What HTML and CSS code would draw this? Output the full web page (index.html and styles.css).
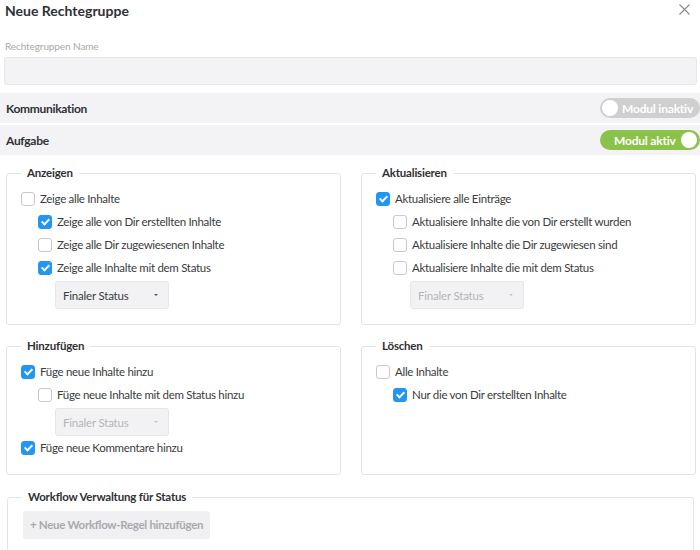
FILE: index.html
```html
<!DOCTYPE html>
<html lang="de">

<head>
    <meta charset="UTF-8">
    <meta name="viewport" content="width=device-width, initial-scale=1.0">
    <title>Neue Rechtegruppe</title>
    <link rel="stylesheet" href="styles.css">
</head>

<body>
    <div class="modal">
        <!-- Kopf -->
        <div class="modal_head">
            <h1 class="modal_title">Neue Rechtegruppe</h1>
            <span class="close_btn">
                <svg width="11" height="11" viewBox="0 0 11 11">
                    <path d="M0.5 0.5 L10.5 10.5 M10.5 0.5 L0.5 10.5" stroke="#8a8a8a" stroke-width="1.1" fill="none" />
                </svg>
            </span>
        </div>

        <div class="name_field">
            <div class="field_label">Rechtegruppen Name</div>
            <div class="text_input"></div>
        </div>

        <!-- Module -->
        <div class="module_row">
            <span class="module_name">Kommunikation</span>
            <span class="toggle toggle_off"><span class="knob"></span>Modul inaktiv</span>
        </div>
        <div class="module_row">
            <span class="module_name">Aufgabe</span>
            <span class="toggle toggle_on">Modul aktiv<span class="knob"></span></span>
        </div>

        <!-- Rechte -->
        <div class="perm_grid">
            <fieldset class="perm_box">
                <legend>Anzeigen</legend>
                <div class="check_row"><span class="check"></span>Zeige alle Inhalte</div>
                <div class="sub">
                    <div class="check_row"><span class="check checked"></span>Zeige alle von Dir erstellten Inhalte</div>
                    <div class="check_row"><span class="check"></span>Zeige alle Dir zugewiesenen Inhalte</div>
                    <div class="check_row"><span class="check checked"></span>Zeige alle Inhalte mit dem Status</div>
                    <div class="sub">
                        <div class="status_select">Finaler Status<span class="caret"></span></div>
                    </div>
                </div>
            </fieldset>

            <fieldset class="perm_box">
                <legend>Aktualisieren</legend>
                <div class="check_row"><span class="check checked"></span>Aktualisiere alle Einträge</div>
                <div class="sub">
                    <div class="check_row"><span class="check"></span>Aktualisiere Inhalte die von Dir erstellt wurden</div>
                    <div class="check_row"><span class="check"></span>Aktualisiere Inhalte die Dir zugewiesen sind</div>
                    <div class="check_row"><span class="check"></span>Aktualisiere Inhalte die mit dem Status</div>
                    <div class="sub">
                        <div class="status_select disabled">Finaler Status<span class="caret"></span></div>
                    </div>
                </div>
            </fieldset>

            <fieldset class="perm_box">
                <legend>Hinzufügen</legend>
                <div class="check_row"><span class="check checked"></span>Füge neue Inhalte hinzu</div>
                <div class="sub">
                    <div class="check_row"><span class="check"></span>Füge neue Inhalte mit dem Status hinzu</div>
                    <div class="sub">
                        <div class="status_select disabled">Finaler Status<span class="caret"></span></div>
                    </div>
                </div>
                <div class="check_row"><span class="check checked"></span>Füge neue Kommentare hinzu</div>
            </fieldset>

            <fieldset class="perm_box">
                <legend>Löschen</legend>
                <div class="check_row"><span class="check"></span>Alle Inhalte</div>
                <div class="sub">
                    <div class="check_row"><span class="check checked"></span>Nur die von Dir erstellten Inhalte</div>
                </div>
            </fieldset>
        </div>

        <fieldset class="perm_box workflow_box">
            <legend>Workflow Verwaltung für Status</legend>
            <div class="add_rule_btn">+ Neue Workflow-Regel hinzufügen</div>
        </fieldset>
    </div>
</body>

</html>
```
FILE: styles.css
```css
body {
    margin: 0;
    background-color: #fff;
    font-family: "Lato", "Liberation Sans", sans-serif;
    color: #333;
}

.modal {
    width: 700px;
}

/* Kopf */
.modal_head {
    display: flex;
    justify-content: space-between;
    align-items: center;
    height: 20px;
    padding: 0 10px 0 5px;
}

.modal_title {
    margin: 0;
    font-size: 14px;
    font-weight: bold;
    color: #2f3135;
}

.close_btn {
    display: flex;
    margin-top: -1px;
}

/* Name */
.name_field {
    padding: 20px 3px 0 4px;
    margin-bottom: 8px;
}

.field_label {
    font-size: 10px;
    color: #a9a9a9;
    padding-left: 1px;
    margin-bottom: 5px;
    letter-spacing: -0.1px;
}

.text_input {
    height: 26px;
    background-color: #f3f3f5;
    border: 1px solid #e6e6e8;
    border-radius: 3px;
}

/* Module */
.module_row {
    display: flex;
    justify-content: space-between;
    align-items: center;
    height: 30px;
    padding-left: 6px;
    background-color: #f3f3f5;
    margin-bottom: 2px;
}

.module_name {
    font-size: 12px;
    font-weight: bold;
    color: #2f3135;
    letter-spacing: -0.3px;
}

.toggle {
    display: flex;
    align-items: center;
    width: 100px;
    height: 20px;
    box-sizing: border-box;
    border-radius: 10px;
    color: #fff;
    font-size: 12px;
    font-weight: bold;
    letter-spacing: -0.2px;
}

.toggle .knob {
    width: 16px;
    height: 16px;
    border-radius: 50%;
    background-color: #fff;
}

.toggle_off {
    background-color: #cfcfcf;
    padding-left: 2px;
}

.toggle_off .knob {
    margin-right: 4px;
}

.toggle_on {
    background-color: #8bc34a;
    padding-left: 14px;
    justify-content: space-between;
    padding-right: 3px;
}

/* Rechte */
.perm_grid {
    display: grid;
    grid-template-columns: 335px 335px;
    column-gap: 20px;
    row-gap: 13px;
    padding: 8px 5px 0 6px;
}

.perm_box {
    margin: 0;
    padding: 6px 14px 15px 14px;
    border: 1px solid #e4e4e6;
    border-radius: 3px;
    min-width: 0;
}

.perm_box legend {
    padding: 0 6px;
    font-size: 11.5px;
    font-weight: bold;
    color: #2f3135;
    line-height: 16px;
    letter-spacing: -0.2px;
}

.sub {
    padding-left: 17px;
}

.check_row {
    display: flex;
    align-items: center;
    height: 23px;
    font-size: 11.5px;
    color: #3a3c40;
    letter-spacing: -0.3px;
}

.check {
    width: 12px;
    height: 12px;
    border: 1px solid #c9c9cc;
    border-radius: 3px;
    margin-right: 5px;
    background-color: #fff;
    flex-shrink: 0;
    display: flex;
    align-items: center;
    justify-content: center;
}

.check.checked {
    background-color: #2196f3;
    border-color: #2196f3;
}

.check.checked::after {
    content: "";
    width: 3px;
    height: 6px;
    border-right: 2px solid #fff;
    border-bottom: 2px solid #fff;
    transform: rotate(45deg);
    margin-top: -2px;
}

.status_select {
    display: flex;
    justify-content: space-between;
    align-items: center;
    width: 114px;
    height: 28px;
    box-sizing: border-box;
    margin-top: 2px;
    padding: 0 10px 0 7px;
    background-color: #f2f2f4;
    border: 1px solid #e6e6e8;
    border-radius: 3px;
    font-size: 11.5px;
    color: #3a3c40;
    letter-spacing: -0.2px;
}

.status_select .caret {
    width: 0;
    height: 0;
    border-left: 2px solid transparent;
    border-right: 2px solid transparent;
    border-top: 2px solid #555;
}

.status_select.disabled {
    color: #b5b5b8;
}

.status_select.disabled .caret {
    border-top-color: #c5c5c8;
}

.workflow_box {
    margin: 14px 6px 0 7px;
    padding-top: 6px;
    padding-bottom: 20px;
}

.add_rule_btn {
    display: inline-block;
    margin-left: 1px;
    padding: 0 7px;
    height: 28px;
    line-height: 28px;
    background-color: #f0f0f2;
    border-radius: 3px;
    font-size: 11.5px;
    font-weight: bold;
    color: #a9a9ad;
    letter-spacing: -0.3px;
}
```
